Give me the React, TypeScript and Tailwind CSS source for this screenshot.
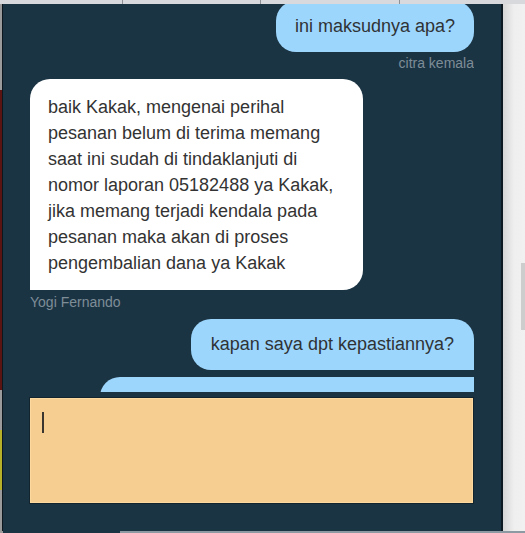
import React from 'react';

const whiteLines = [
  'baik Kakak, mengenai perihal',
  'pesanan belum di terima memang',
  'saat ini sudah di tindaklanjuti di',
  'nomor laporan 05182488 ya Kakak,',
  'jika memang terjadi kendala pada',
  'pesanan maka akan di proses',
  'pengembalian dana ya Kakak',
];

function SenderName({ name, align }: { name: string; align: 'left' | 'right' }) {
  return (
    <p
      className={
        align === 'right'
          ? 'text-right text-[14px] leading-[16px] text-[#7e8d97]'
          : 'text-left text-[14px] leading-[16px] text-[#7e8d97]'
      }
    >
      {name}
    </p>
  );
}

export default function App() {
  return (
    <div className="flex h-[533px] w-[525px] flex-col overflow-hidden bg-[#f0f0f0] font-[family-name:'Liberation_Sans',Arial,sans-serif]">
      {/* browser strip at top */}
      <div className="flex h-[4px] shrink-0 bg-[#d7d9dc]">
        <div className="w-[123px] border-r border-[#8d9096]" />
        <div className="w-[138px] border-r border-[#8d9096]" />
        <div className="w-[139px] border-r border-[#8d9096]" />
      </div>

      <div className="flex min-h-0 flex-1">
        {/* page behind, left edge */}
        <div className="flex w-[2px] flex-col bg-[#9b9b9b]">
          <div className="h-[86px]" />
          <div className="h-[300px] bg-[#5c1412]" />
          <div className="h-[40px]" />
          <div className="h-[60px] bg-[#b7b12a]" />
        </div>
        <div className="w-px bg-[#0c161c]" />

        {/* chat panel */}
        <main className="flex w-[498px] flex-col bg-[#1b3444] pr-[27px] pl-[26px]">
          <div className="flex h-[388px] shrink-0 flex-col overflow-hidden pl-px text-[18px] text-[#2f3336]">
            <div className="-mt-[3px] flex shrink-0 justify-end">
              <div className="flex h-[51px] items-center rounded-[20px] bg-[#9dd6fd] px-[19px]">
                ini maksudnya apa?
              </div>
            </div>
            <div className="mt-[3px]">
              <SenderName name="citra kemala" align="right" />
            </div>

            <div className="mt-[8px] flex shrink-0">
              <div className="w-[333px] whitespace-nowrap rounded-[20px] rounded-bl-none bg-white px-[18px] pt-[15px] pb-[14px] leading-[26px] text-[#333]">
                {whiteLines.map((line) => (
                  <div key={line}>{line}</div>
                ))}
              </div>
            </div>
            <div className="mt-[4px]">
              <SenderName name="Yogi Fernando" align="left" />
            </div>

            <div className="mt-[9px] flex shrink-0 justify-end">
              <div className="flex h-[51px] items-center rounded-[20px] rounded-br-none bg-[#9dd6fd] px-[20px]">
                kapan saya dpt kepastiannya?
              </div>
            </div>
            <div className="mt-[7px] flex shrink-0 justify-end">
              <div className="h-[51px] w-[374px] rounded-tl-[20px] bg-[#9dd6fd]" />
            </div>
          </div>

          {/* message input */}
          <div className="mt-[5px] h-[107px] shrink-0 border border-[#14242e] bg-[#f6ce92] px-[12px] pt-[14px] shadow-[inset_0_0_0_1px_#fcd99f]">
            <span className="block h-[21px] w-[2px] bg-[#3b3530]" />
          </div>
        </main>

        <div className="w-[2px] bg-[#0e1a21]" />

        {/* page behind, right side with scrollbar */}
        <div className="flex flex-1 bg-gradient-to-r from-[#d6d6d6] via-[#efefef] to-[#f1f1f1]">
          <div className="flex-1" />
          <div className="flex w-[4px] flex-col">
            <div className="h-[259px]" />
            <div className="h-[67px] bg-[#cdcdcd]" />
          </div>
        </div>
      </div>

      {/* bottom edge */}
      <div className="flex h-[2px] shrink-0">
        <div className="w-[3px] bg-[#9b9b9b]" />
        <div className="w-[117px] bg-[#1b3444]" />
        <div className="flex-1 bg-[#8e9aa3]" />
      </div>
    </div>
  );
}
